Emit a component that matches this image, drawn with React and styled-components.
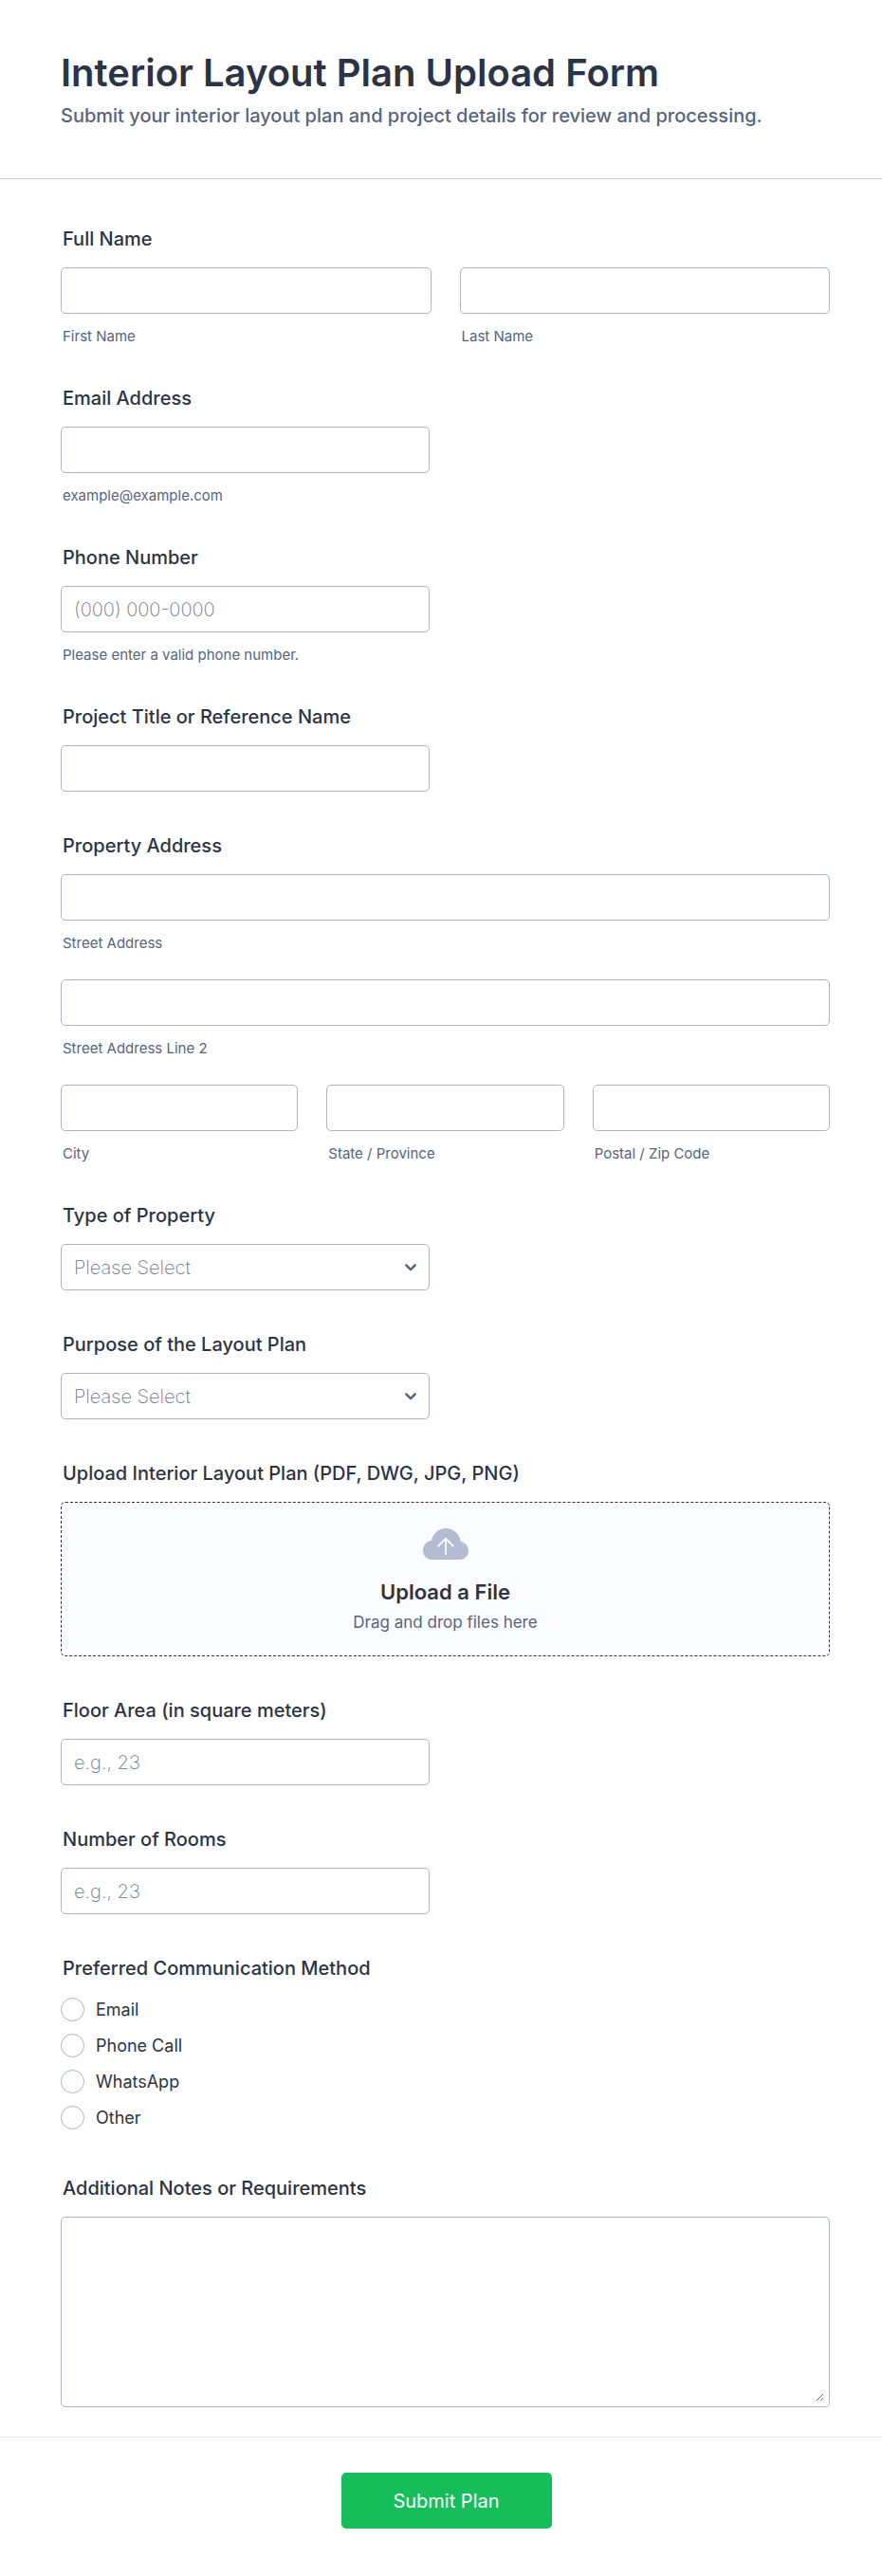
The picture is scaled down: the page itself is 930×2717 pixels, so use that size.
import React from 'react';
import styled, { createGlobalStyle } from 'styled-components';

const GlobalStyle = createGlobalStyle`
  *,
  *::before,
  *::after {
    box-sizing: border-box;
  }

  body {
    margin: 0;
    background-color: #fff;
    color: #2c3345;
    font-family: Inter, 'Liberation Sans', sans-serif;
  }
`;

const StyledForm = styled.form`
  width: 100%;
`;

const StyledHeader = styled.header`
  padding: 53px 55px 53px 64px;
  border-bottom: 1px solid #c8cddb;
`;

const StyledTitle = styled.h1`
  margin: 0;
  font-size: 40px;
  font-weight: 600;
  line-height: 48px;
`;

const StyledSubtitle = styled.p`
  margin: 8px 0 0;
  color: #57647e;
  font-size: 20px;
  font-weight: 500;
  line-height: 26px;
`;

const StyledFields = styled.div`
  display: flex;
  flex-direction: column;
  gap: 45px;
  padding: 51px 55px 31px 64px;
`;

const StyledField = styled.div`
  width: ${(props) => (props.$half ? 'calc(50% - 17px)' : '100%')};
`;

const StyledGroup = styled.fieldset`
  width: 100%;
  min-width: 0;
  margin: 0;
  padding: 0;
  border: 0;
`;

const StyledLabel = styled.label`
  display: block;
  margin-bottom: 18px;
  padding: 0 2px;
  font-size: 20px;
  font-weight: 500;
  line-height: 24px;
`;

const StyledColumns = styled.div`
  display: grid;
  grid-template-columns: repeat(${(props) => props.$count}, minmax(0, 1fr));
  gap: 30px;
`;

const StyledRows = styled.div`
  display: flex;
  flex-direction: column;
  gap: 30px;
`;

const StyledInput = styled.input`
  display: block;
  width: 100%;
  height: 49px;
  padding: 0 13px;
  border: 1px solid #aeb4c5;
  border-radius: 5px;
  background-color: #fff;
  color: #2c3345;
  font-family: inherit;
  font-size: 20px;

  &::placeholder {
    color: #66788f;
    font-weight: 200;
    opacity: 1;
  }
`;

const StyledHint = styled.label`
  display: block;
  margin-top: 16px;
  padding: 0 2px;
  color: #57647e;
  font-size: 15px;
  line-height: 16px;
`;

const StyledSelectWrapper = styled.div`
  position: relative;
`;

const StyledSelect = styled.select`
  display: block;
  width: 100%;
  height: 49px;
  padding: 0 40px 0 13px;
  appearance: none;
  border: 1px solid #aeb4c5;
  border-radius: 5px;
  background-color: #fff;
  color: #66788f;
  font-family: inherit;
  font-size: 20px;
  font-weight: 200;
`;

const StyledChevron = styled.svg`
  position: absolute;
  top: 0;
  right: 14px;
  bottom: 0;
  width: 12px;
  height: 8px;
  margin: auto 0;
  pointer-events: none;
`;

const StyledDropzone = styled.button`
  display: flex;
  flex-direction: column;
  align-items: center;
  width: 100%;
  padding: 27px 20px 23px;
  border: 1px dashed #2c3345;
  border-radius: 5px;
  background-color: #fafcff;
  color: #2c3345;
  font-family: inherit;
  cursor: pointer;
`;

const StyledCloud = styled.svg`
  width: 48px;
  height: 33px;
`;

const StyledUploadTitle = styled.span`
  margin-top: 20px;
  font-size: 22px;
  font-weight: 600;
  line-height: 28px;
`;

const StyledUploadText = styled.span`
  margin-top: 6px;
  color: #57647e;
  font-size: 17px;
  line-height: 24px;
`;

const StyledOptions = styled.div`
  display: flex;
  flex-direction: column;
  gap: 13px;
  padding: 1px 0 5px;
`;

const StyledOption = styled.label`
  display: flex;
  align-items: center;
  gap: 12px;
  font-size: 18px;
  line-height: 24px;
`;

const StyledRadio = styled.input`
  flex: none;
  width: 25px;
  height: 25px;
  margin: 0;
  appearance: none;
  border: 1px solid #aeb4c5;
  border-radius: 50%;
  background-color: #fff;

  &:checked {
    border: 7px solid #2e69ff;
  }
`;

const StyledTextareaWrapper = styled.div`
  padding: 5px;
  border: 1px solid #aeb4c5;
  border-radius: 5px;
  background-color: #fff;
`;

const StyledTextarea = styled.textarea`
  display: block;
  width: 100%;
  height: 189px;
  padding: 7px;
  border: 0;
  background-color: #fff;
  color: #2c3345;
  font-family: inherit;
  font-size: 20px;
  resize: vertical;
`;

const StyledFooter = styled.footer`
  display: flex;
  justify-content: center;
  padding: 37px 54px 50px 65px;
  border-top: 1px solid #e3e6ee;
`;

const StyledSubmit = styled.button`
  min-width: 222px;
  height: 59px;
  padding: 0 20px;
  border: 0;
  border-radius: 5px;
  background-color: #18bd5b;
  color: #fff;
  font-family: inherit;
  font-size: 20px;
  cursor: pointer;
`;

const contactMethods = ['Email', 'Phone Call', 'WhatsApp', 'Other'];

const TextField = ({ id, label, hint, type = 'text', placeholder }) => (
  <StyledField $half>
    <StyledLabel htmlFor={id}>{label}</StyledLabel>
    <StyledInput id={id} name={id} type={type} placeholder={placeholder} />
    {hint && <StyledHint htmlFor={id}>{hint}</StyledHint>}
  </StyledField>
);

const SubField = ({ id, hint }) => (
  <div>
    <StyledInput id={id} name={id} type="text" />
    <StyledHint htmlFor={id}>{hint}</StyledHint>
  </div>
);

const SelectField = ({ id, label, options }) => (
  <StyledField $half>
    <StyledLabel htmlFor={id}>{label}</StyledLabel>
    <StyledSelectWrapper>
      <StyledSelect id={id} name={id} defaultValue="">
        <option value="">Please Select</option>
        {options.map((option) => (
          <option key={option}>{option}</option>
        ))}
      </StyledSelect>
      <StyledChevron viewBox="0 0 12 8" fill="none" aria-hidden="true">
        <path
          d="M1.4 1.5 6 6.1l4.6-4.6"
          stroke="#57647e"
          strokeWidth="2.5"
          strokeLinecap="round"
          strokeLinejoin="round"
        />
      </StyledChevron>
    </StyledSelectWrapper>
  </StyledField>
);

const App = () => (
  <>
    <GlobalStyle />
    <StyledForm onSubmit={(event) => event.preventDefault()}>
      <StyledHeader>
        <StyledTitle>Interior Layout Plan Upload Form</StyledTitle>
        <StyledSubtitle>
          Submit your interior layout plan and project details for review and processing.
        </StyledSubtitle>
      </StyledHeader>
      <StyledFields>
        <StyledGroup>
          <StyledLabel as="legend">Full Name</StyledLabel>
          <StyledColumns $count={2}>
            <SubField id="first-name" hint="First Name" />
            <SubField id="last-name" hint="Last Name" />
          </StyledColumns>
        </StyledGroup>
        <TextField id="email" type="email" label="Email Address" hint="example@example.com" />
        <TextField
          id="phone"
          type="tel"
          label="Phone Number"
          placeholder="(000) 000-0000"
          hint="Please enter a valid phone number."
        />
        <TextField id="project" label="Project Title or Reference Name" />
        <StyledGroup>
          <StyledLabel as="legend">Property Address</StyledLabel>
          <StyledRows>
            <SubField id="street" hint="Street Address" />
            <SubField id="street-2" hint="Street Address Line 2" />
            <StyledColumns $count={3}>
              <SubField id="city" hint="City" />
              <SubField id="state" hint="State / Province" />
              <SubField id="postal" hint="Postal / Zip Code" />
            </StyledColumns>
          </StyledRows>
        </StyledGroup>
        <SelectField
          id="property-type"
          label="Type of Property"
          options={['Residential', 'Commercial']}
        />
        <SelectField
          id="purpose"
          label="Purpose of the Layout Plan"
          options={['Renovation', 'New Construction']}
        />
        <StyledField>
          <StyledLabel as="div" id="upload-label">
            Upload Interior Layout Plan (PDF, DWG, JPG, PNG)
          </StyledLabel>
          <StyledDropzone type="button" aria-describedby="upload-label">
            <StyledCloud viewBox="0 0 48 33" fill="none" aria-hidden="true">
              <path
                d="M9.5 33C4 33 0 28.6 0 23.2 0 17.7 3.8 13.4 9 12.7 10.8 5.2 16.8 0 24 0c8 0 14.7 5.8 15.8 14C44.5 14.8 48 18.8 48 23.6 48 28.9 44 33 38.5 33z"
                fill="#b3bcd0"
              />
              <path d="M24 28V11M15.8 19 24 10.8 32.2 19" stroke="#fafcff" strokeWidth="1.8" />
            </StyledCloud>
            <StyledUploadTitle>Upload a File</StyledUploadTitle>
            <StyledUploadText>Drag and drop files here</StyledUploadText>
          </StyledDropzone>
        </StyledField>
        <TextField id="floor-area" label="Floor Area (in square meters)" placeholder="e.g., 23" />
        <TextField id="rooms" label="Number of Rooms" placeholder="e.g., 23" />
        <StyledGroup>
          <StyledLabel as="legend">Preferred Communication Method</StyledLabel>
          <StyledOptions>
            {contactMethods.map((method) => (
              <StyledOption key={method}>
                <StyledRadio type="radio" name="contact-method" value={method} />
                {method}
              </StyledOption>
            ))}
          </StyledOptions>
        </StyledGroup>
        <StyledField>
          <StyledLabel htmlFor="notes">Additional Notes or Requirements</StyledLabel>
          <StyledTextareaWrapper>
            <StyledTextarea id="notes" name="notes" />
          </StyledTextareaWrapper>
        </StyledField>
      </StyledFields>
      <StyledFooter>
        <StyledSubmit type="submit">Submit Plan</StyledSubmit>
      </StyledFooter>
    </StyledForm>
  </>
);

export default App;
